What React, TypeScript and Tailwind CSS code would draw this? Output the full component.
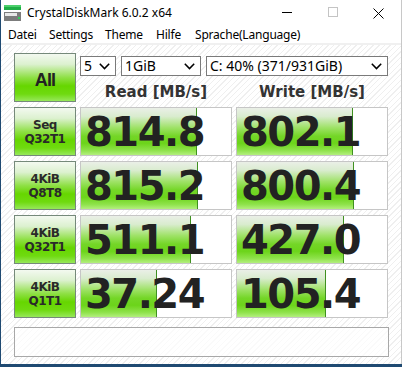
import React from "react";

const rows = [
  { l1: "Seq", l2: "Q32T1", r: "814.8", rw: 116, w: "802.1", ww: 116 },
  { l1: "4KiB", l2: "Q8T8", r: "815.2", rw: 117, w: "800.4", ww: 117 },
  { l1: "4KiB", l2: "Q32T1", r: "511.1", rw: 110, w: "427.0", ww: 107 },
  { l1: "4KiB", l2: "Q1T1", r: "37.24", rw: 76, w: "105.4", ww: 89 },
];

const btnCls =
  "border border-[#75897a] bg-[linear-gradient(to_bottom,#f3f9f0_0%,#dcf1cf_22%,#8fe046_50%,#66d600_68%,#6fda10_85%,#96e85a_100%)] flex flex-col items-center justify-center text-[#2a2a2a] font-['DejaVu_Sans',sans-serif] font-bold";

function Chevron() {
  return (
    <svg width="11" height="7" viewBox="0 0 11 7" className="shrink-0">
      <polyline points="0.8,0.8 5.5,5.6 10.2,0.8" fill="none" stroke="#000" strokeWidth="1.5" />
    </svg>
  );
}

function Select({ w, text }: { w: string; text: string }) {
  return (
    <div className={`${w} h-[20px] border border-[#7a7a7a] bg-white flex items-center pl-[3px] pr-[5px] justify-between`}>
      <span className="text-[14px] leading-none text-black font-['Noto_Sans',sans-serif]">{text}</span>
      <Chevron />
    </div>
  );
}

function Cell({ value, fill }: { value: string; fill: number }) {
  return (
    <div className="relative h-[49px] border border-[#c6c6c6] bg-white flex items-center">
      <div
        className="absolute left-0 top-0 bottom-0 border-r border-[#3f9020] bg-[linear-gradient(to_bottom,#eaefe7_0%,#d9ecce_18%,#9ee266_42%,#74d627_60%,#6cd41a_75%,#8ee24a_90%,#b3ef7e_100%)]"
        style={{ width: fill }}
      />
      <span className="relative pl-[4px] text-[40px] leading-none tracking-[-1.5px] font-bold text-[#222] font-['DejaVu_Sans',sans-serif]">
        {value}
      </span>
    </div>
  );
}

export default function App() {
  return (
    <div className="w-[402px] h-[367px] bg-[#1f4a72] overflow-hidden">
      <div className="ml-[1px] w-[401px] h-[364px] bg-white flex flex-col border-r border-[#c8c8c8] font-['Noto_Sans',sans-serif]">
        {/* title bar */}
        <div className="h-[26px] flex items-center shrink-0">
          <svg width="18" height="17" viewBox="0 0 18 17" className="ml-[3px] mt-[1px]">
            <rect x="0" y="0" width="17" height="5" fill="#1fae46" />
            <rect x="0" y="0" width="17" height="2" fill="#4cd06c" />
            <rect x="0" y="7" width="17" height="9" fill="#7c7c7c" />
            <rect x="1" y="8" width="12" height="3" fill="#e8e8e8" />
            <rect x="14" y="12" width="2" height="2" fill="#2fd05a" />
          </svg>
          <span className="ml-[5px] text-[12px] text-black leading-none">CrystalDiskMark 6.0.2 x64</span>
          <div className="ml-auto flex h-full">
            <div className="w-[46px] flex items-center justify-center">
              <div className="w-[10px] h-[1px] bg-black mt-[-1px]" />
            </div>
            <div className="w-[46px] flex items-center justify-center">
              <div className="w-[10px] h-[10px] border border-[#c4c4c4] mt-[-2px]" />
            </div>
            <div className="w-[45px] flex items-center justify-center">
              <svg width="11" height="11" viewBox="0 0 11 11">
                <path d="M0.5 0.5 L10.5 10.5 M10.5 0.5 L0.5 10.5" stroke="#000" strokeWidth="1" />
              </svg>
            </div>
          </div>
        </div>
        {/* menu */}
        <div className="h-[17px] flex items-center text-[12px] text-black leading-none shrink-0 pl-[7px] tracking-[-0.2px]">
          <span className="w-[41px]">Datei</span>
          <span className="w-[56px]">Settings</span>
          <span className="w-[51px]">Theme</span>
          <span className="w-[39px]">Hilfe</span>
          <span>Sprache(Language)</span>
        </div>
        <div className="h-[2px] bg-[#f0f0f0] shrink-0" />
        {/* content */}
        <div className="flex-1 pl-[13px] pt-[8px] bg-[#fcfcfc] bg-[repeating-linear-gradient(135deg,#ffffff_0px,#ffffff_3px,#efefef_3px,#efefef_4px)]">
          <div className="grid grid-cols-[62px_152px_152px] gap-x-[4px] gap-y-[5px]">
            <div className={`${btnCls} h-[49px]`}>
              <span className="text-[18px] leading-none tracking-[-0.8px] text-[#222] font-['Liberation_Sans',sans-serif] mt-[5px]">All</span>
            </div>
            <div className="col-span-2 flex flex-col">
              <div className="flex gap-[5px] mt-[3px]">
                <Select w="w-[36px]" text="5" />
                <Select w="w-[80px]" text="1GiB" />
                <Select w="w-[182px]" text="C: 40% (371/931GiB)" />
              </div>
              <div className="flex gap-[4px] mt-[7px]">
                <div className="w-[152px] text-center text-[15px] leading-[18px] font-bold text-[#333] font-['DejaVu_Sans',sans-serif]">
                  Read [MB/s]
                </div>
                <div className="w-[152px] text-center text-[15px] leading-[18px] font-bold text-[#333] font-['DejaVu_Sans',sans-serif]">
                  Write [MB/s]
                </div>
              </div>
            </div>
            {rows.map((row, i) => (
              <React.Fragment key={i}>
                <div className={`${btnCls} h-[49px] text-[12px] leading-[14px] tracking-[-0.5px]`}>
                  <span>{row.l1}</span>
                  <span>{row.l2}</span>
                </div>
                <Cell value={row.r} fill={row.rw} />
                <Cell value={row.w} fill={row.ww} />
              </React.Fragment>
            ))}
          </div>
          <div className="mt-[9px] w-[375px] h-[30px] border border-[#a8a8a8] bg-white/70" />
        </div>
      </div>
    </div>
  );
}
